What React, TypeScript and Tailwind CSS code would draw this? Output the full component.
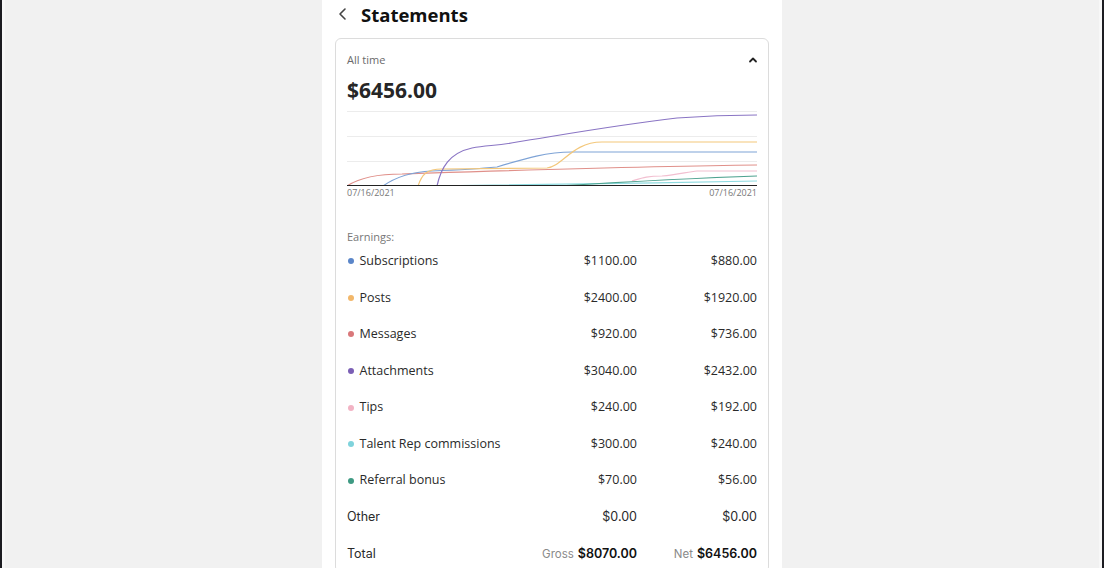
import React from "react";

const rows = [
  { name: "Subscriptions", color: "bg-[#5b86c9]", gross: "$1100.00", net: "$880.00" },
  { name: "Posts", color: "bg-[#f2b76a]", gross: "$2400.00", net: "$1920.00" },
  { name: "Messages", color: "bg-[#d9787a]", gross: "$920.00", net: "$736.00" },
  { name: "Attachments", color: "bg-[#7b5fb5]", gross: "$3040.00", net: "$2432.00" },
  { name: "Tips", color: "bg-[#f2b3c4]", gross: "$240.00", net: "$192.00" },
  { name: "Talent Rep commissions", color: "bg-[#7fd3dc]", gross: "$300.00", net: "$240.00" },
  { name: "Referral bonus", color: "bg-[#3e9a83]", gross: "$70.00", net: "$56.00" },
];

function Chart() {
  return (
    <svg width="410" height="80" viewBox="0 0 410 80" className="block">
      <line x1="0" x2="410" y1="5.5" y2="5.5" stroke="#ececec" strokeWidth="1" />
      <line x1="0" x2="410" y1="30.5" y2="30.5" stroke="#ececec" strokeWidth="1" />
      <line x1="0" x2="410" y1="55.5" y2="55.5" stroke="#ececec" strokeWidth="1" />
      <g fill="none" strokeWidth="1.2">
        <path d="M0 80 C 15 70, 35 68, 55 68 C 150 65, 300 60, 410 59" stroke="#e0908a" />
        <path d="M36 80 C 50 70, 65 66, 85 65 C 110 64, 130 63, 150 61 C 180 52, 200 46, 225 46 L 410 46" stroke="#7ea3d6" />
        <path d="M71 80 C 75 68, 80 63, 95 63 L 200 62 C 215 61, 225 36, 255 36 L 410 36" stroke="#f3c77a" />
        <path d="M78 80 C 200 79, 300 77, 410 75" stroke="#8fdbe0" />
        <path d="M285 75 C 295 72, 300 70, 315 70 C 330 69, 340 66, 350 65 L 410 65" stroke="#f2bfd0" />
        <path d="M211 80 C 260 77, 350 72, 410 70" stroke="#4fa390" />
        <path d="M90 80 C 94 62, 102 47, 125 42 C 140 39, 150 40, 170 36 C 220 28, 270 19, 330 12 C 370 9, 395 9, 410 9" stroke="#8a75c4" />
      </g>
      <line x1="0" x2="410" y1="79.5" y2="79.5" stroke="#222" strokeWidth="1" />
    </svg>
  );
}

export default function App() {
  return (
    <div
      className="w-[1104px] h-[568px] bg-[#1c1c21] px-[2px] overflow-hidden"
      style={{ fontFamily: '"Open Sans", "Noto Sans", sans-serif' }}
    >
      <div className="h-full bg-[#f1f1f1] border-x-[3px] border-[#f7f7f7] flex justify-center">
        <div className="w-[460px] h-full bg-white px-[13px]">
          {/* Header */}
          <div className="h-[30px] flex items-center">
            <svg width="12" height="14" viewBox="0 0 12 14" className="ml-[2px] mt-[-2px]">
              <path d="M8 2 L3 7 L8 12" fill="none" stroke="#444" strokeWidth="1.6" strokeLinecap="round" strokeLinejoin="round" />
            </svg>
            <h1 className="ml-[12px] text-[18.5px] leading-[24px] font-bold text-[#111] mt-[-1px]">Statements</h1>
          </div>

          {/* Card */}
          <div className="mt-[8px] border border-[#dcdcdc] rounded-[6px] px-[11px] pt-[14px]">
            <div className="flex items-center justify-between">
              <span className="text-[11px] leading-[14px] text-[#6a6a6a]">All time</span>
              <svg width="10" height="8" viewBox="0 0 10 8" className="mr-[-1px]">
                <path d="M2 5.5 L5 2.5 L8 5.5" fill="none" stroke="#222" strokeWidth="1.8" strokeLinecap="round" strokeLinejoin="round" />
              </svg>
            </div>
            <div className="mt-[8px] text-[21px] leading-[30px] font-bold text-[#262626]">$6456.00</div>

            <div className="mt-[1px]">
              <Chart />
              <div className="flex justify-between text-[9px] leading-[12px] text-[#777] mt-[1px]">
                <span>07/16/2021</span>
                <span>07/16/2021</span>
              </div>
            </div>

            <div className="mt-[32px] text-[11px] leading-[12px] text-[#777]">Earnings:</div>

            <div className="flex flex-col text-[12.5px] text-[#2a2a2a]">
              {rows.map((r) => (
                <div key={r.name} className="h-[36.6px] flex items-center">
                  <div className="flex-1 flex items-center">
                    <span className={`w-[6px] h-[6px] rounded-full ${r.color} ml-[0.5px]`} />
                    <span className="ml-[6px]">{r.name}</span>
                  </div>
                  <div className="w-[120px] text-right">{r.gross}</div>
                  <div className="w-[120px] text-right">{r.net}</div>
                </div>
              ))}
              <div
                className="h-[36.6px] flex items-center text-[12.5px]"
                style={{ fontFamily: 'Inter, "Open Sans", sans-serif' }}
              >
                <div className="flex-1">Other</div>
                <div className="w-[120px] text-right">$0.00</div>
                <div className="w-[120px] text-right">$0.00</div>
              </div>
              <div
                className="h-[36.6px] flex items-center text-[12.5px]"
                style={{ fontFamily: 'Inter, "Open Sans", sans-serif' }}
              >
                <div className="flex-1">Total</div>
                <div className="w-[140px] text-right">
                  <span className="text-[11.5px] text-[#8a8a8a]">Gross</span>
                  <span className="ml-[4px] text-[12.5px] font-semibold text-[#111]">$8070.00</span>
                </div>
                <div className="w-[120px] text-right">
                  <span className="text-[11.5px] text-[#8a8a8a]">Net</span>
                  <span className="ml-[4px] text-[12.5px] font-semibold text-[#111]">$6456.00</span>
                </div>
              </div>
            </div>
          </div>
        </div>
      </div>
    </div>
  );
}
